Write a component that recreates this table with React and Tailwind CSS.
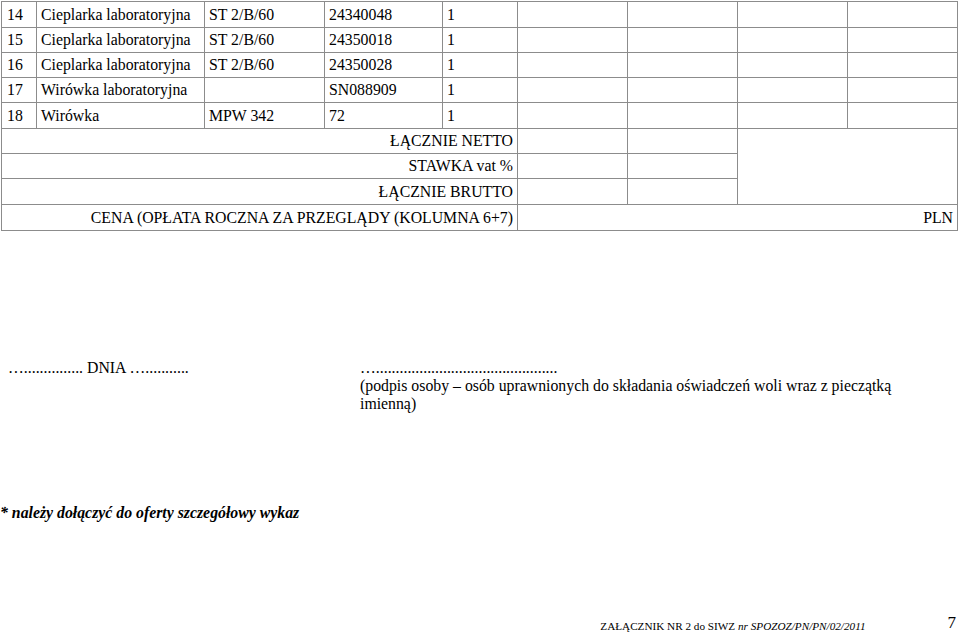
import React from 'react';

const rows = [
  ['14', 'Cieplarka laboratoryjna', 'ST 2/B/60', '24340048', '1'],
  ['15', 'Cieplarka laboratoryjna', 'ST 2/B/60', '24350018', '1'],
  ['16', 'Cieplarka laboratoryjna', 'ST 2/B/60', '24350028', '1'],
  ['17', 'Wirówka laboratoryjna', '', 'SN088909', '1'],
  ['18', 'Wirówka', 'MPW 342', '72', '1'],
];

const cell = 'border-r border-b border-[#8c8c8c] flex items-center px-[4px] whitespace-nowrap';

export default function App() {
  return (
    <div className="w-[959px] h-[632px] bg-white text-black flex flex-col font-['Liberation_Serif','Times_New_Roman',serif] text-[15.8px] leading-[18px] overflow-hidden">
      <div className="ml-px mt-px grid grid-cols-[35px_168px_120px_118px_75px_110px_110px_110px_110px] grid-rows-[26px_25px_25px_25px_26px_25px_25px_26px_26px] border-l border-t border-[#8c8c8c] w-[957px]">
        {rows.map((r, i) => (
          <React.Fragment key={i}>
            {r.map((v, j) => (
              <div key={j} className={j === 0 ? `${cell} pl-[5px]` : cell}>{v}</div>
            ))}
            <div className={cell} />
            <div className={cell} />
            <div className={cell} />
            <div className={cell} />
          </React.Fragment>
        ))}

        <div className={`${cell} col-span-5 justify-end`}>ŁĄCZNIE NETTO</div>
        <div className={cell} />
        <div className={cell} />
        <div className={`${cell} col-span-2 row-span-3`} />

        <div className={`${cell} col-span-5 justify-end`}>STAWKA vat %</div>
        <div className={cell} />
        <div className={cell} />

        <div className={`${cell} col-span-5 justify-end`}>ŁĄCZNIE BRUTTO</div>
        <div className={cell} />
        <div className={cell} />

        <div className={`${cell} col-span-5 justify-end`}>CENA (OPŁATA ROCZNA ZA PRZEGLĄDY (KOLUMNA 6+7)</div>
        <div className={`${cell} col-span-4 justify-end`}>PLN</div>
      </div>

      <div className="mt-[128px] flex">
        <div className="w-[360px] pl-[8px]">…............... DNIA …...........</div>
        <div className="flex flex-col">
          <div>…..............................................</div>
          <div>(podpis osoby – osób uprawnionych do składania oświadczeń woli wraz z pieczątką</div>
          <div>imienną)</div>
        </div>
      </div>

      <div className="mt-[91px] font-bold italic">* należy dołączyć do oferty szczegółowy wykaz</div>

      <div className="mt-auto flex items-end justify-end pr-[3px]">
        <span className="text-[11.2px] leading-[14px] mr-[82px] -mb-[1px]">
          ZAŁĄCZNIK NR 2 do SIWZ <i>nr SPOZOZ/PN/PN/02/2011</i>
        </span>
        <span className="text-[17px] leading-[18px]">7</span>
      </div>
    </div>
  );
}
